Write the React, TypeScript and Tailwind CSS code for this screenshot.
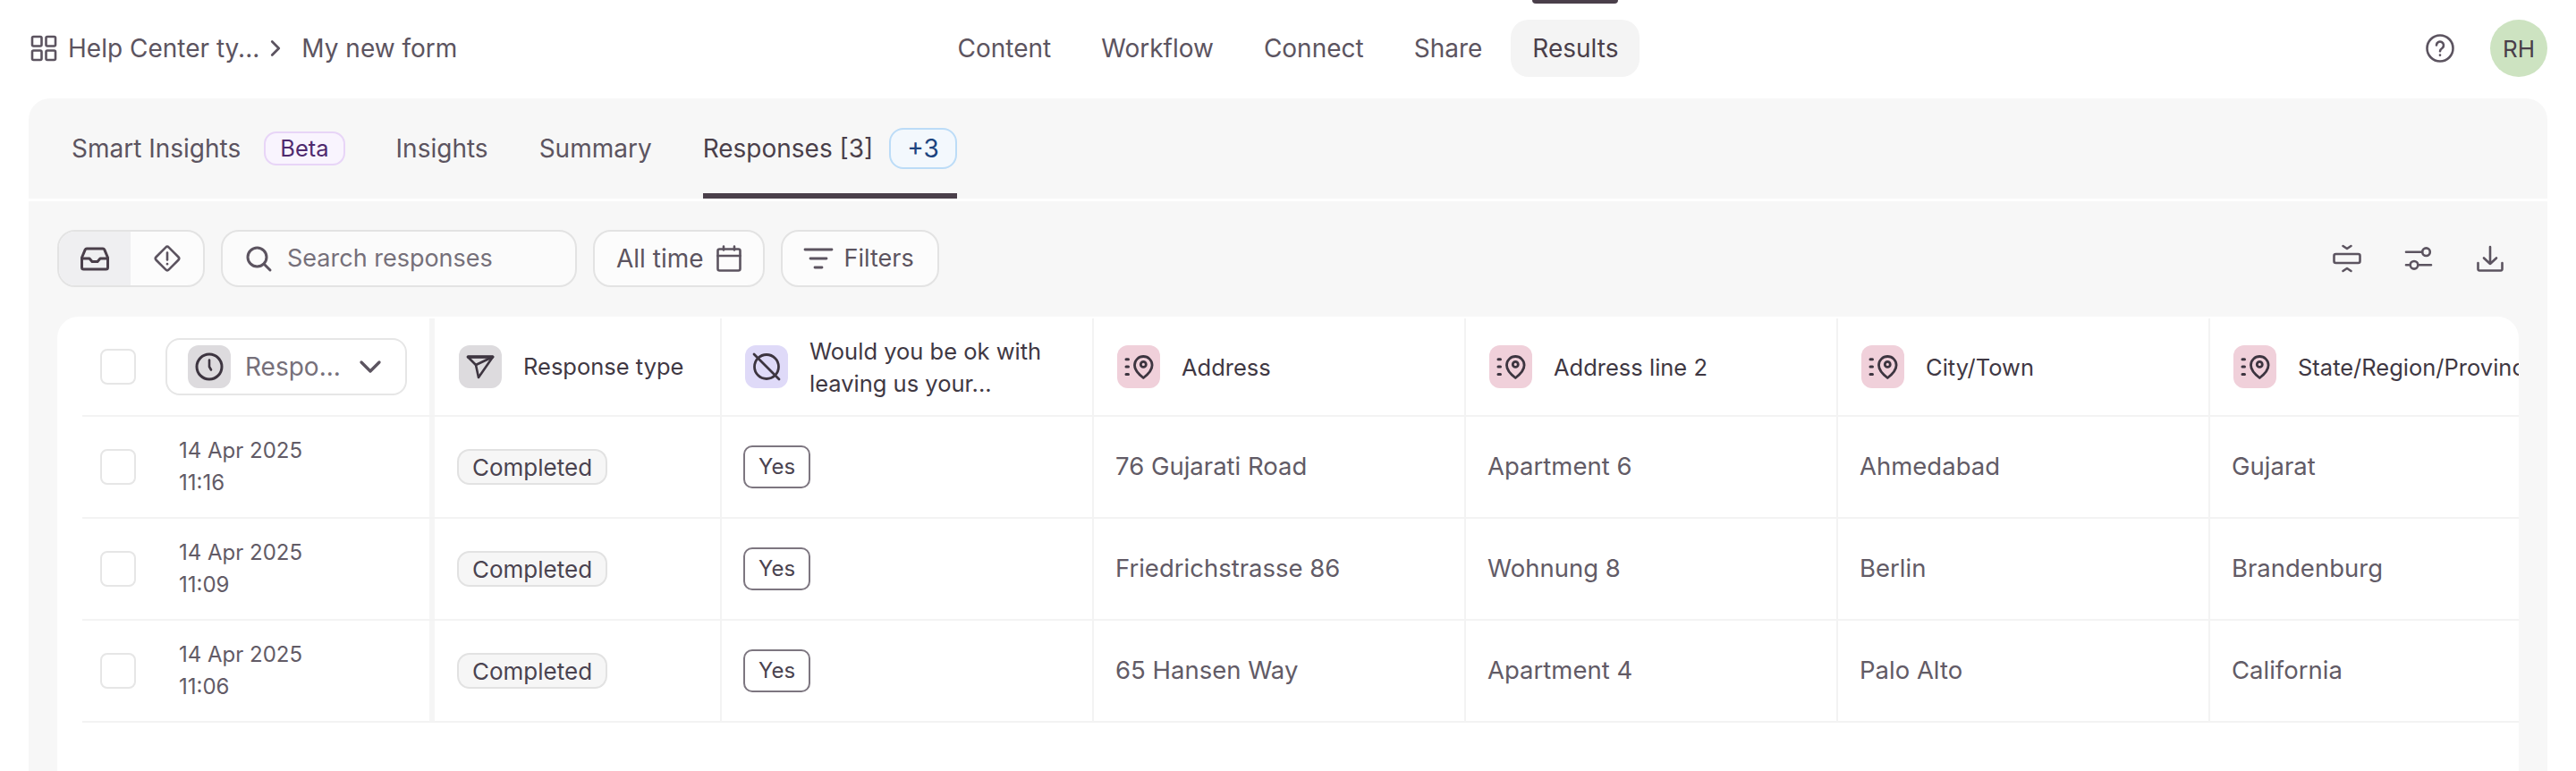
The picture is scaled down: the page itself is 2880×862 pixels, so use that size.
import { ReactNode } from "react";
import { ChevronDown, ChevronRight } from "lucide-react";

const rows = [
  { date: "14 Apr 2025", time: "11:16", address: "76 Gujarati Road", line2: "Apartment 6", city: "Ahmedabad", state: "Gujarat" },
  { date: "14 Apr 2025", time: "11:09", address: "Friedrichstrasse 86", line2: "Wohnung 8", city: "Berlin", state: "Brandenburg" },
  { date: "14 Apr 2025", time: "11:06", address: "65 Hansen Way", line2: "Apartment 4", city: "Palo Alto", state: "California" },
];

function Icon({ size = 32, children, className = "" }: { size?: number; children: ReactNode; className?: string }) {
  return (
    <svg
      width={size}
      height={size}
      viewBox="0 0 32 32"
      fill="none"
      stroke="currentColor"
      strokeWidth={2.6}
      strokeLinecap="round"
      strokeLinejoin="round"
      className={`shrink-0 overflow-visible ${className}`}
    >
      {children}
    </svg>
  );
}

const GridIcon = () => (
  <Icon className="text-[#5c5460]">
    <rect x="3" y="3" width="10.5" height="10.5" rx="1.5" />
    <rect x="18.5" y="3" width="10.5" height="10.5" rx="1.5" />
    <rect x="3" y="18.5" width="10.5" height="10.5" rx="1.5" />
    <rect x="18.5" y="18.5" width="10.5" height="10.5" rx="1.5" />
  </Icon>
);

const InboxIcon = () => (
  <Icon className="text-[#4a3f4a]">
    <path d="M7 5h18a2 2 0 0 1 1.800 1.100L30.500 15v11a2 2 0 0 1-2 2h-25a2 2 0 0 1-2-2V15l3.700-8.900A2 2 0 0 1 7 5z" strokeWidth={3} />
    <path d="M1.500 16h8.500l3 3.500h6l3-3.500h8.500" strokeWidth={3} />
  </Icon>
);

const AlertIcon = () => (
  <Icon className="text-[#5c5460]">
    <rect x="6" y="6" width="20" height="20" rx="2.500" transform="rotate(45 16 16)" />
    <path d="M16 9.500v8" />
    <path d="M16 22v.2" />
  </Icon>
);

const SearchIcon = () => (
  <Icon className="text-[#5c5460]">
    <circle cx="14.5" cy="14.5" r="10.5" strokeWidth={3} />
    <path d="m23 23 6 6" strokeWidth={3} />
  </Icon>
);

const CalendarIcon = () => (
  <Icon className="text-[#5c5460]">
    <rect x="3.5" y="5.5" width="25" height="24" rx="2" />
    <path d="M3.5 13h25" />
    <path d="M10 2.5v4M22 2.5v4" />
  </Icon>
);

const FilterIcon = () => (
  <Icon className="text-[#5c5460]">
    <path d="M1 6h30M7 16h18M12 26h8" strokeWidth={2.8} />
  </Icon>
);

const CompactIcon = () => (
  <Icon className="text-[#5c5460]">
    <rect x="1.500" y="11" width="29" height="10" rx="2" />
    <path d="m11.500 2 4.500 3 4.500-3M11.500 30l4.500-3 4.500 3" />
  </Icon>
);

const SlidersIcon = () => (
  <Icon className="text-[#5c5460]">
    <path d="M2 8.700h18M16 23.300h14M2 23.300h3" />
    <circle cx="24.500" cy="8.700" r="4.300" />
    <circle cx="11" cy="23.300" r="4.300" />
  </Icon>
);

const DownloadIcon = () => (
  <Icon className="text-[#5c5460]">
    <path d="M16 3v19M9 15.500l7 6.500 7-6.500" />
    <path d="M2.500 21v7a1.500 1.500 0 0 0 1.500 1.500h24a1.500 1.500 0 0 0 1.500-1.500v-7" />
  </Icon>
);

const HelpIcon = () => (
  <Icon className="text-[#5c5460]">
    <circle cx="16" cy="16" r="14.5" />
    <path d="M12 12.5a4 4 0 1 1 6.5 3.2c-1.600 1.100-2.500 1.800-2.500 3.500" />
    <path d="M16 23.500v.2" />
  </Icon>
);

const ClockIcon = () => (
  <Icon className="text-[#3d3540]">
    <circle cx="16" cy="16" r="14" strokeWidth={3} />
    <path d="M16 8.500V16l2 3.500" />
  </Icon>
);

const SendIcon = () => (
  <Icon className="text-[#3d3540]">
    <path d="M2 5h28L14 28 11 14z" />
    <path d="M11 14 30 5" />
    <path d="M2.500 5h27" strokeWidth={3.600} />
  </Icon>
);

const NoneIcon = () => (
  <Icon className="text-[#3d3540]">
    <circle cx="16" cy="16" r="13.500" strokeWidth={2.800} />
    <path d="m2 2 28 28" strokeWidth={2.800} />
  </Icon>
);

const PinIcon = () => (
  <Icon className="text-[#3d3540]">
    <path d="M21.300 28.500C18 26 11.500 21 11.500 14.300a9.800 9.800 0 0 1 19.600 0C31.100 21 24.600 26 21.300 28.500z" strokeWidth={2.800} />
    <circle cx="21.300" cy="13.400" r="3" strokeWidth={2.800} />
    <path d="M2 7.700h2.500M2 16h2.500M2 24.400h2.500" strokeWidth={3} />
  </Icon>
);

function Chip({ color, children }: { color: string; children: ReactNode }) {
  return <div className={`flex h-12 w-12 shrink-0 items-center justify-center rounded-xl ${color}`}>{children}</div>;
}

function Checkbox() {
  return <div className="h-10 w-10 shrink-0 rounded-lg border-2 border-[#e6e6e6] bg-white" />;
}

function HeadCell({ chip, icon, children }: { chip: string; icon: ReactNode; children: ReactNode }) {
  return (
    <div className="flex w-[416px] shrink-0 items-center gap-6 border-r-2 border-[#f3f3f3] pl-[26px]">
      <Chip color={chip}>{icon}</Chip>
      <span className="mt-[1px] whitespace-nowrap text-[25.5px] leading-9 text-[#3f3843]">{children}</span>
    </div>
  );
}

function Cell({ children }: { children: ReactNode }) {
  return (
    <div className="flex w-[416px] shrink-0 items-center border-r-2 border-[#f3f3f3] pl-6 text-[27.5px] text-[#625b66]">
      {children}
    </div>
  );
}

export default function App() {
  return (
    <div className="flex h-[862px] w-[2880px] flex-col overflow-hidden bg-white font-['Inter',sans-serif] text-[28px] text-[#5c5460]">
      <header className="grid h-[110px] shrink-0 grid-cols-[1fr_auto_1fr] items-center px-8 pb-[2px]">
        <div className="flex items-center">
          <span className="ml-[1px]">
            <GridIcon />
          </span>
          <span className="ml-[11px]">Help Center ty...</span>
          <ChevronRight size={30} strokeWidth={2.2} className="ml-[3px] text-[#5c5460]" />
          <span className="ml-[14px]">My new form</span>
        </div>
        <nav className="flex items-center gap-2">
          <a className="px-6">Content</a>
          <a className="px-6">Workflow</a>
          <a className="px-6">Connect</a>
          <a className="px-6">Share</a>
          <a className="relative flex h-16 items-center rounded-[20px] bg-[#f4f4f4] px-6 text-[#4a3f4a]">
            Results
            <span className="absolute left-6 right-6 top-[-22px] h-1 rounded-b-sm bg-[#4a3f4a]" />
          </a>
        </nav>
        <div className="flex items-center justify-end gap-10">
          <HelpIcon />
          <div className="flex h-16 w-16 items-center justify-center rounded-full bg-[#cde3c1] text-[26px] text-[#4a3f4a]">
            RH
          </div>
        </div>
      </header>

      <main className="mx-8 flex min-h-0 flex-1 flex-col rounded-t-3xl bg-[#f7f7f7]">
        <div className="flex h-[115px] shrink-0 items-stretch gap-[57px] border-b-[3px] border-white pl-12">
          <div className="flex items-center border-y-[6px] border-transparent">
            <span>Smart Insights</span>
            <span className="ml-[26px] flex h-[38px] items-center rounded-[14px] border-2 border-[#e8d5f7] bg-[#f9f4fe] px-4 text-[25.5px] text-[#4f2a6e]">
              Beta
            </span>
          </div>
          <div className="flex items-center border-y-[6px] border-transparent">Insights</div>
          <div className="flex items-center border-y-[6px] border-transparent">Summary</div>
          <div className="flex items-center border-y-[6px] border-t-transparent border-b-[#4a3f4a] text-[#4a3f4a]">
            <span>Responses [3]</span>
            <span className="ml-[18px] flex h-[46px] items-center rounded-[16px] border-2 border-[#bcdcf7] bg-[#f3f8fd] px-[18px] text-[#1c4480]">
              +3
            </span>
          </div>
        </div>

        <div className="mt-8 flex h-16 shrink-0 items-center gap-[18px] px-8">
          <div className="flex h-16 w-[165px] overflow-hidden rounded-[20px] border-2 border-[#e3e3e3] bg-[#fcfcfc]">
            <div className="flex w-[80px] items-center justify-center bg-[#efeff1]">
              <InboxIcon />
            </div>
            <div className="flex flex-1 items-center justify-center">
              <AlertIcon />
            </div>
          </div>
          <div className="flex h-16 w-[398px] items-center gap-4 rounded-[20px] border-2 border-[#e3e3e3] bg-[#fbfbfb] pl-6 text-[27px] text-[#76707a]">
            <SearchIcon />
            <span>Search responses</span>
          </div>
          <div className="flex h-16 items-center gap-3 rounded-[20px] border-2 border-[#e3e3e3] bg-[#fcfcfc] pl-6 pr-[22px]">
            <span>All time</span>
            <CalendarIcon />
          </div>
          <div className="flex h-16 items-center gap-[13px] rounded-[20px] border-2 border-[#e3e3e3] bg-[#fcfcfc] pl-6 pr-[26px] text-[27px]">
            <FilterIcon />
            <span>Filters</span>
          </div>
          <div className="ml-auto flex items-center gap-12 pr-4">
            <CompactIcon />
            <SlidersIcon />
            <DownloadIcon />
          </div>
        </div>

        <div className="mx-8 mt-[33px] min-h-0 flex-1 overflow-hidden rounded-t-3xl bg-white">
          <div className="ml-7 flex h-28 overflow-hidden border-b-2 border-[#f3f3f3] pt-[2px]">
            <div className="flex w-[394px] shrink-0 items-center border-r-[6px] border-[#f5f5f5] pl-5">
              <Checkbox />
              <div className="mb-[1px] ml-[33px] flex h-16 w-[270px] items-center rounded-2xl border-2 border-[#e6e6e6] pl-[23px]">
                <Chip color="bg-[#dddbde]">
                  <ClockIcon />
                </Chip>
                <span className="ml-4 text-[#76707a]">Respo...</span>
                <ChevronDown size={40} strokeWidth={2} className="ml-auto mr-[19px] text-[#5c5460]" />
              </div>
            </div>
            <div className="flex w-[321px] shrink-0 items-center gap-6 border-r-2 border-[#f3f3f3] pl-[27px]">
              <Chip color="bg-[#dddbde]">
                <SendIcon />
              </Chip>
              <span className="mt-[1px] text-[25.5px] text-[#3f3843]">Response type</span>
            </div>
            <HeadCell chip="bg-[#dfdaf8]" icon={<NoneIcon />}>
              Would you be ok with
              <br />
              leaving us your...
            </HeadCell>
            <HeadCell chip="bg-[#f0d0da]" icon={<PinIcon />}>
              Address
            </HeadCell>
            <HeadCell chip="bg-[#f0d0da]" icon={<PinIcon />}>
              Address line 2
            </HeadCell>
            <HeadCell chip="bg-[#f0d0da]" icon={<PinIcon />}>
              City/Town
            </HeadCell>
            <HeadCell chip="bg-[#f0d0da]" icon={<PinIcon />}>
              State/Region/Province
            </HeadCell>
          </div>

          {rows.map((row) => (
            <div key={row.time} className="ml-7 flex h-[114px] overflow-hidden border-b-2 border-[#f3f3f3]">
              <div className="flex w-[394px] shrink-0 items-center border-r-[6px] border-[#f5f5f5] pl-5">
                <Checkbox />
                <div className="ml-12 text-2xl leading-9 text-[#625b66]">
                  <div>{row.date}</div>
                  <div>{row.time}</div>
                </div>
              </div>
              <div className="flex w-[321px] shrink-0 items-center border-r-2 border-[#f3f3f3] pl-[25px]">
                <span className="flex h-10 items-center rounded-[14px] border-2 border-[#e2e2e2] bg-[#f6f6f6] px-[15px] text-[26px] text-[#4a4350]">
                  Completed
                </span>
              </div>
              <div className="flex w-[416px] shrink-0 items-center border-r-2 border-[#f3f3f3] pl-6">
                <span className="flex h-12 items-center rounded-[10px] border-2 border-[#7d7680] px-[15px] text-2xl text-[#4a4350]">
                  Yes
                </span>
              </div>
              <Cell>{row.address}</Cell>
              <Cell>{row.line2}</Cell>
              <Cell>{row.city}</Cell>
              <Cell>{row.state}</Cell>
            </div>
          ))}
        </div>
      </main>
    </div>
  );
}
